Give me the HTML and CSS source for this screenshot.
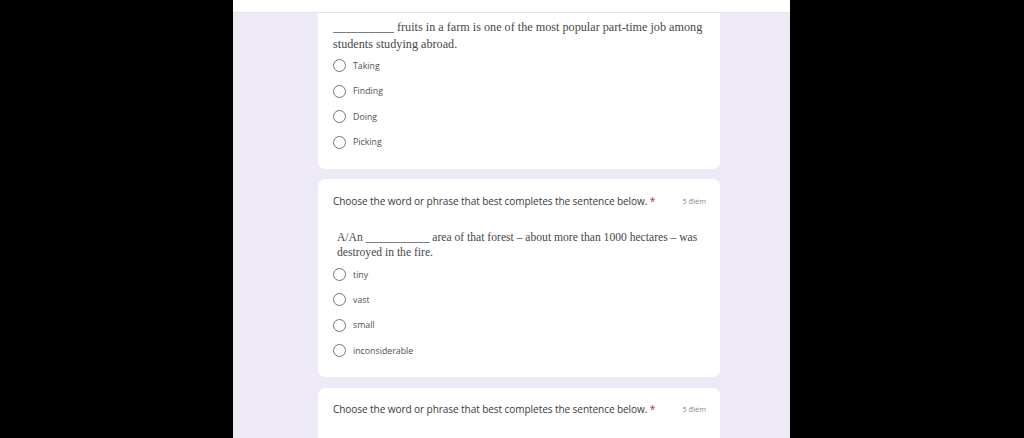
FILE: index.html
```html
<!DOCTYPE html>
<html lang="en">
<head>
<meta charset="utf-8">
<title>Form</title>
<link rel="stylesheet" href="styles.css">
</head>
<body>
<div class="viewport">
  <div class="topbar"></div>
  <div class="content">
    <section class="card card-first">
      <p class="qtext">__________ fruits in a farm is one of the most popular part-time job among students studying abroad.</p>
      <ul class="options">
        <li class="option"><span class="radio"></span><span class="label">Taking</span></li>
        <li class="option"><span class="radio"></span><span class="label">Finding</span></li>
        <li class="option"><span class="radio"></span><span class="label">Doing</span></li>
        <li class="option"><span class="radio"></span><span class="label">Picking</span></li>
      </ul>
    </section>

    <section class="card card-mid">
      <div class="title-row">
        <span class="title">Choose the word or phrase that best completes the sentence below. <span class="req">*</span></span>
        <span class="points">5 điểm</span>
      </div>
      <p class="qtext qtext-second">A/An ___________ area of that forest – about more than 1000 hectares – was destroyed in the fire.</p>
      <ul class="options options-second">
        <li class="option"><span class="radio"></span><span class="label">tiny</span></li>
        <li class="option"><span class="radio"></span><span class="label">vast</span></li>
        <li class="option"><span class="radio"></span><span class="label">small</span></li>
        <li class="option"><span class="radio"></span><span class="label">inconsiderable</span></li>
      </ul>
    </section>

    <section class="card card-last">
      <div class="title-row">
        <span class="title">Choose the word or phrase that best completes the sentence below. <span class="req">*</span></span>
        <span class="points">5 điểm</span>
      </div>
    </section>
  </div>
</div>
</body>
</html>
```

FILE: styles.css
```css
html, body {
  margin: 0;
  padding: 0;
  background: #000;
  height: 438px;
  overflow: hidden;
}

.viewport {
  width: 557px;
  margin: 0 0 0 233px;
  height: 438px;
  background: #ede9f6;
  display: flex;
  flex-direction: column;
  overflow: hidden;
}

.topbar {
  height: 12px;
  background: #fff;
  border-bottom: 1px solid #e2e2e6;
  flex: none;
}

.content {
  padding: 0 70px 0 85px;
  display: flex;
  flex-direction: column;
  gap: 10px;
}

.card {
  background: #fff;
  border-radius: 7px;
  padding: 15px 14px 13px 15px;
}

.card-first {
  border-radius: 0 0 7px 7px;
  padding-top: 6px;
  padding-bottom: 14px;
}

.card-mid {
  padding-bottom: 14px;
}

.card-last {
  margin-top: 1px;
  border-radius: 7px 7px 0 0;
  padding-top: 14px;
  padding-bottom: 22px;
}

.title-row {
  display: flex;
  justify-content: space-between;
  align-items: center;
  height: 14px;
}

.title {
  font-family: "Open Sans", "Liberation Sans", sans-serif;
  font-size: 10.1px;
  color: #3a3a3a;
  letter-spacing: -0.1px;
}

.req {
  color: #a33;
}

.points {
  font-family: "Open Sans", "Liberation Sans", sans-serif;
  font-size: 7.4px;
  color: #888;
}

.qtext {
  margin: 0;
  font-family: "Liberation Serif", "Times New Roman", serif;
  font-size: 12.2px;
  line-height: 17px;
  color: #474747;
}

.qtext-second {
  margin-top: 22px;
  padding-left: 4px;
  font-size: 11.6px;
  line-height: 15px;
}

.options {
  list-style: none;
  margin: 0;
  padding: 0;
}

.options-second {
  margin-top: 2px;
}

.option {
  height: 25.5px;
  display: flex;
  align-items: center;
}

.options-second .option {
  height: 25.3px;
}

.radio {
  width: 11px;
  height: 11px;
  border: 1.5px solid #757575;
  border-radius: 50%;
  flex: none;
}

.label {
  margin-left: 7px;
  font-family: "Open Sans", "Liberation Sans", sans-serif;
  font-size: 8.8px;
  color: #505050;
}
```
